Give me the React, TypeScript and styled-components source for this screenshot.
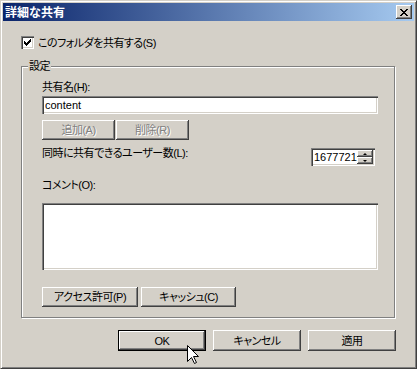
import React from 'react';
import styled, { createGlobalStyle, css } from 'styled-components';

const Global = createGlobalStyle`
  html, body { margin: 0; padding: 0; background: #D4D0C8; }
  body {
    font-family: "Liberation Sans", "Noto Sans CJK JP", sans-serif;
    font-size: 11px;
    letter-spacing: -0.5px;
    font-feature-settings: "palt";
    color: #000;
  }
  * { box-sizing: border-box; }
`;

const raised = css`
  box-shadow: inset -1px -1px #404040, inset 1px 1px #ffffff, inset -2px -2px #808080;
`;

const sunken = css`
  box-shadow: inset 1px 1px #808080, inset 2px 2px #404040, inset -1px -1px #ffffff,
    inset -2px -2px #d4d0c8;
`;

const Window = styled.div`
  position: relative;
  width: 417px;
  height: 369px;
  background: #d4d0c8;
  border-style: solid;
  border-width: 1px;
  border-color: #d4d0c8 #404040 #404040 #d4d0c8;
  box-shadow: inset 1px 1px #ffffff, inset -1px -1px #808080;
  padding: 2px;
  display: flex;
  flex-direction: column;
`;

const TitleBar = styled.div`
  height: 18px;
  flex: none;
  display: flex;
  align-items: flex-start;
  justify-content: space-between;
  padding: 0 2px 0 2px;
  background: linear-gradient(to right, #0a246a, #a6caf0);
`;

const TitleText = styled.span`
  color: #fff;
  font-family: "Noto Sans CJK JP", sans-serif;
  font-feature-settings: normal;
  letter-spacing: 0;
  font-weight: bold;
  font-size: 12px;
  line-height: 18px;
`;

const CloseButton = styled.div`
  margin-top: 2px;
  width: 16px;
  height: 14px;
  background: #d4d0c8;
  ${raised};
  display: flex;
  align-items: center;
  justify-content: center;
`;

const CheckRow = styled.label`
  display: flex;
  align-items: center;
  gap: 4px;
  height: 13px;
  margin: 15px 0 0 18px;
  line-height: 14px;
`;

const CheckBox = styled.span`
  width: 13px;
  height: 13px;
  flex: none;
  background: #fff;
  ${sunken};
  display: block;
`;

const Group = styled.div`
  position: relative;
  margin: 17px 0 0 18px;
  width: 374px;
  border: 1px solid #808080;
  box-shadow: inset 1px 1px #ffffff, 1px 1px #ffffff;
  padding: 13px 16px 10px 20px;
  display: flex;
  flex-direction: column;
`;

const Legend = styled.span`
  position: absolute;
  top: -8px;
  left: 6px;
  padding: 0 1px;
  background: #d4d0c8;
  line-height: 14px;
`;

const Label = styled.div<{ $top?: number }>`
  line-height: 14px;
  height: 14px;
  white-space: nowrap;
  margin-top: ${(p) => p.$top ?? 0}px;
`;

const TextField = styled.input`
  display: block;
  width: 100%;
  height: 18px;
  margin-top: 2px;
  border: none;
  outline: none;
  background: #fff;
  ${sunken};
  padding: 0 0 0 3px;
  font: inherit;
  letter-spacing: 0;
  line-height: 14px;
  color: #000;
`;

const ButtonRow = styled.div<{ $gap: number; $top: number }>`
  display: flex;
  gap: ${(p) => p.$gap}px;
  margin-top: ${(p) => p.$top}px;
`;

const Button = styled.button<{ $w: number; $h: number; $default?: boolean }>`
  width: ${(p) => p.$w}px;
  height: ${(p) => p.$h}px;
  flex: none;
  padding: 0;
  margin: 0;
  border: none;
  background: #d4d0c8;
  font: inherit;
  letter-spacing: inherit;
  color: #000;
  line-height: 14px;
  ${raised};
  ${(p) =>
    p.$default &&
    css`
      border: 1px solid #000;
    `}
  &:disabled {
    color: #808080;
    text-shadow: 1px 1px #ffffff;
  }
`;

const SpinRow = styled.div`
  display: flex;
  justify-content: space-between;
  align-items: flex-start;
  margin-top: 6px;
  height: 20px;
`;

const SpinBox = styled.div`
  margin-top: 2px;
  margin-right: 3px;
  width: 64px;
  height: 18px;
  background: #fff;
  ${sunken};
  padding: 2px;
  display: flex;
`;

const SpinValue = styled.div`
  flex: 1;
  overflow: hidden;
  white-space: nowrap;
  line-height: 14px;
  letter-spacing: 0;
  padding-left: 1px;
`;

const SpinButtons = styled.div`
  width: 16px;
  display: flex;
  flex-direction: column;
`;

const SpinHalf = styled.div<{ $down?: boolean }>`
  height: 7px;
  background: #d4d0c8;
  ${raised};
  display: flex;
  align-items: center;
  justify-content: center;
  &::after {
    content: "";
    width: 0;
    height: 0;
    border-left: 2px solid transparent;
    border-right: 2px solid transparent;
    ${(p) =>
      p.$down
        ? css`
            border-top: 2px solid #000;
          `
        : css`
            border-bottom: 2px solid #000;
          `}
  }
`;

const TextArea = styled.div`
  margin-top: 11px;
  width: 100%;
  height: 67px;
  background: #fff;
  ${sunken};
`;

const DialogButtons = styled.div`
  display: flex;
  justify-content: flex-end;
  gap: 7px;
  margin-top: 12px;
  padding-right: 18px;
`;

const Cursor = styled.svg`
  position: absolute;
  left: 186px;
  top: 344px;
`;

export default function App() {
  return (
    <>
      <Global />
      <Window>
        <TitleBar>
          <TitleText>詳細な共有</TitleText>
          <CloseButton>
            <svg width="8" height="7" viewBox="0 0 8 7" shapeRendering="crispEdges">
              <path
                d="M0 0h2v1H0zM6 0h2v1H6zM1 1h2v1H1zM5 1h2v1H5zM2 2h4v1H2zM3 3h2v1H3zM2 4h4v1H2zM1 5h2v1H1zM5 5h2v1H5zM0 6h2v1H0zM6 6h2v1H6z"
                fill="#000"
              />
            </svg>
          </CloseButton>
        </TitleBar>

        <CheckRow>
          <CheckBox>
            <svg width="13" height="13" viewBox="0 0 13 13" shapeRendering="crispEdges">
              <path
                d="M9 3h1v1H9zM8 4h2v1H8zM3 5h1v1H3zM7 5h3v1H7zM3 6h2v1H3zM6 6h3v1H6zM3 7h5v1H3zM4 8h3v1H4zM5 9h1v1H5z"
                fill="#000"
              />
            </svg>
          </CheckBox>
          このフォルダを共有する(S)
        </CheckRow>

        <Group>
          <Legend>設定</Legend>
          <Label>共有名(H):</Label>
          <TextField readOnly defaultValue="content" />
          <ButtonRow $gap={1} $top={6}>
            <Button $w={73} $h={20} disabled>
              追加(A)
            </Button>
            <Button $w={73} $h={20} disabled>
              削除(R)
            </Button>
          </ButtonRow>
          <SpinRow>
            <Label>同時に共有できるユーザー数(L):</Label>
            <SpinBox>
              <SpinValue>16777216</SpinValue>
              <SpinButtons>
                <SpinHalf />
                <SpinHalf $down />
              </SpinButtons>
            </SpinBox>
          </SpinRow>
          <Label $top={12}>コメント(O):</Label>
          <TextArea />
          <ButtonRow $gap={3} $top={17}>
            <Button $w={96} $h={20}>
              アクセス許可(P)
            </Button>
            <Button $w={95} $h={20}>
              キャッシュ(C)
            </Button>
          </ButtonRow>
        </Group>

        <DialogButtons>
          <Button $w={88} $h={21} $default>
            OK
          </Button>
          <Button $w={88} $h={21}>
            キャンセル
          </Button>
          <Button $w={88} $h={21}>
            適用
          </Button>
        </DialogButtons>

        <Cursor width="13" height="20" viewBox="0 0 13 20">
          <path
            d="M0.5 0.5 L0.5 16.5 L4.5 12.5 L7.5 18.5 L9.5 17.5 L6.5 11.5 L11.5 11.5 Z"
            fill="#fff"
            stroke="#000"
            strokeWidth="1"
          />
        </Cursor>
      </Window>
    </>
  );
}
